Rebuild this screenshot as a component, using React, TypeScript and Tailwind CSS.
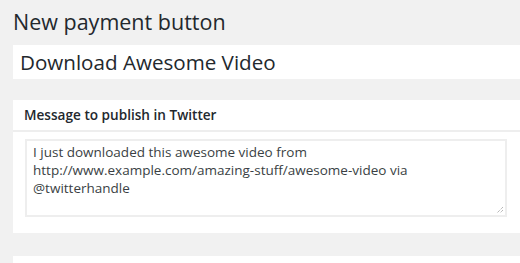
const App = () => {
    return (
        <div className="w-[520px] h-[263px] overflow-hidden bg-[#f1f1f1] font-['Open_Sans',sans-serif] text-[#23282d]">
            <div className="pl-[13px]">
                {/* Page title */}
                <h1 className="pt-[4px] h-[45px] text-[21.5px] leading-[36px] font-normal">New payment button</h1>

                {/* Title input */}
                <div className="h-[34px] bg-white pl-[7px] flex items-center">
                    <span className="text-[20.6px] leading-[34px] text-[#23282d]">Download Awesome Video</span>
                </div>

                {/* Twitter message box */}
                <div className="mt-[21px] bg-white">
                    <div className="h-[32px] pl-[11px] flex items-center border-b-2 border-[#eeeeee]">
                        <h2 className="text-[13.6px] font-semibold text-[#23282d]">Message to publish in Twitter</h2>
                    </div>
                    <div className="pt-[7px] pb-[16px] pl-[12px] pr-[13px]">
                        <div className="relative h-[78px] border-2 border-[#eeeeee] bg-white pl-[6px] pt-[2px] text-[13.5px] leading-[18px] text-[#3a3f44]">
                            <p>I just downloaded this awesome video from</p>
                            <p>http://www.example.com/amazing-stuff/awesome-video via</p>
                            <p>@twitterhandle</p>
                            <svg className="absolute right-[1px] bottom-[1px]" width="8" height="8" viewBox="0 0 8 8">
                                <path d="M7 1 L1 7 M7 4 L4 7" stroke="#999" strokeWidth="1" strokeDasharray="1 1" />
                            </svg>
                        </div>
                    </div>
                </div>

                {/* Next box */}
                <div className="mt-[23px] h-[20px] bg-white" />
            </div>
        </div>
    );
};

export default App;
